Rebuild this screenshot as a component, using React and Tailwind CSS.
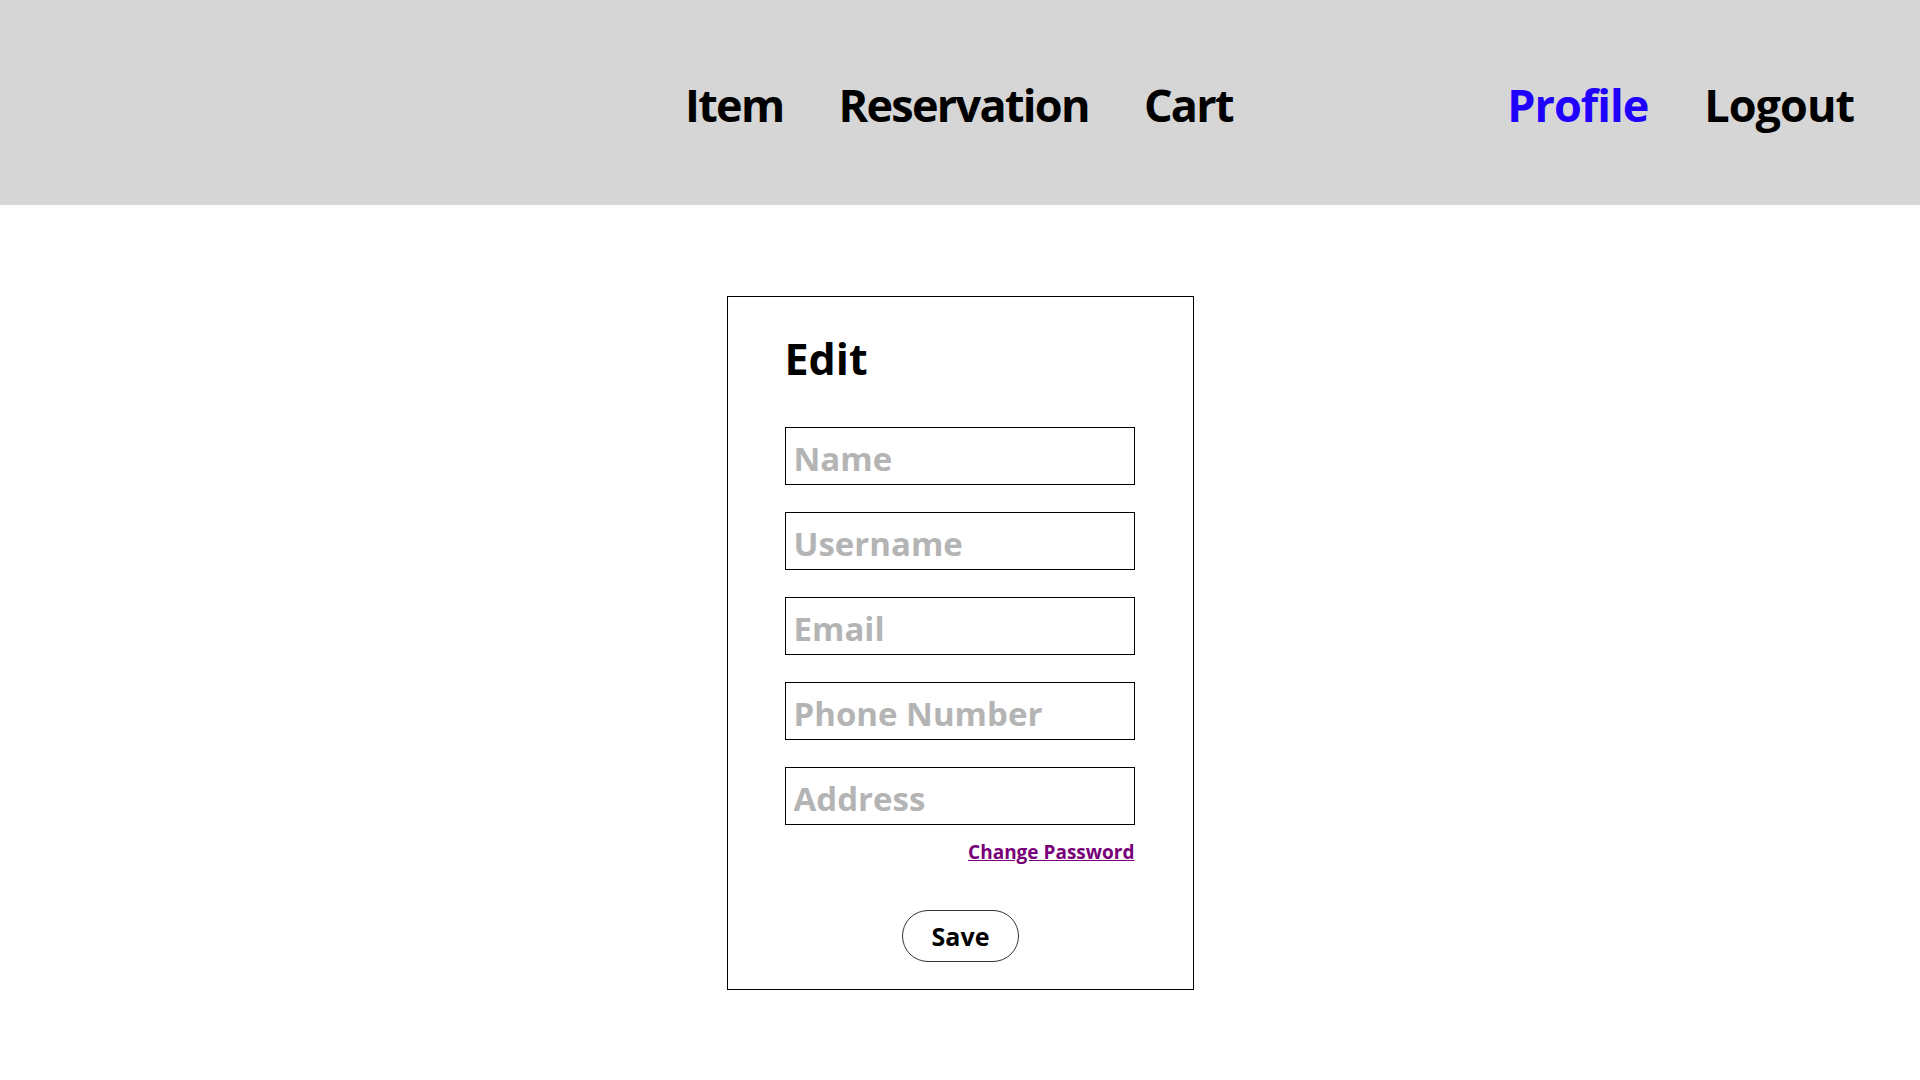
export default function App() {
  const fields = ['Name', 'Username', 'Email', 'Phone Number', 'Address'];

  return (
    <div className="min-h-screen w-full bg-white font-['Open_Sans',sans-serif] font-bold">
      {/* Top nav */}
      <header className="h-[205px] w-full bg-[#d6d6d6] flex items-start justify-between pt-[82px] pl-[685px] pr-[66px]">
        <nav className="flex gap-[55px] text-[45px] leading-none tracking-[-1.7px] text-black">
          <a href="#">Item</a>
          <a href="#">Reservation</a>
          <a href="#">Cart</a>
        </nav>
        <nav className="flex gap-[56px] text-[45px] leading-none tracking-[-1px]">
          <a href="#" className="text-[#2000ff]">Profile</a>
          <a href="#" className="text-black">Logout</a>
        </nav>
      </header>

      {/* Edit card */}
      <main className="flex justify-center pt-[91px]">
        <div className="w-[467px] h-[694px] border border-black px-[57px] pt-[40px] flex flex-col">
          <h1 className="text-[43px] leading-none text-black">Edit</h1>

          <form className="flex flex-col gap-[27px] mt-[47px]">
            {fields.map((f) => (
              <input
                key={f}
                type="text"
                placeholder={f}
                className="w-[350px] h-[58px] border border-black pl-[8px] pt-1 text-[33px] font-bold outline-none placeholder:text-[#b4b4b4]"
              />
            ))}
          </form>

          <div className="w-[350px] flex justify-end mt-[18px]">
            <a href="#" className="text-[19px] leading-none text-[#780078] underline">
              Change Password
            </a>
          </div>

          <div className="w-[350px] flex justify-center mt-[48px] pl-[2px]">
            <button className="w-[117px] h-[52px] rounded-full border border-[#333] text-[25px] leading-none text-black bg-white">
              Save
            </button>
          </div>
        </div>
      </main>
    </div>
  );
}
